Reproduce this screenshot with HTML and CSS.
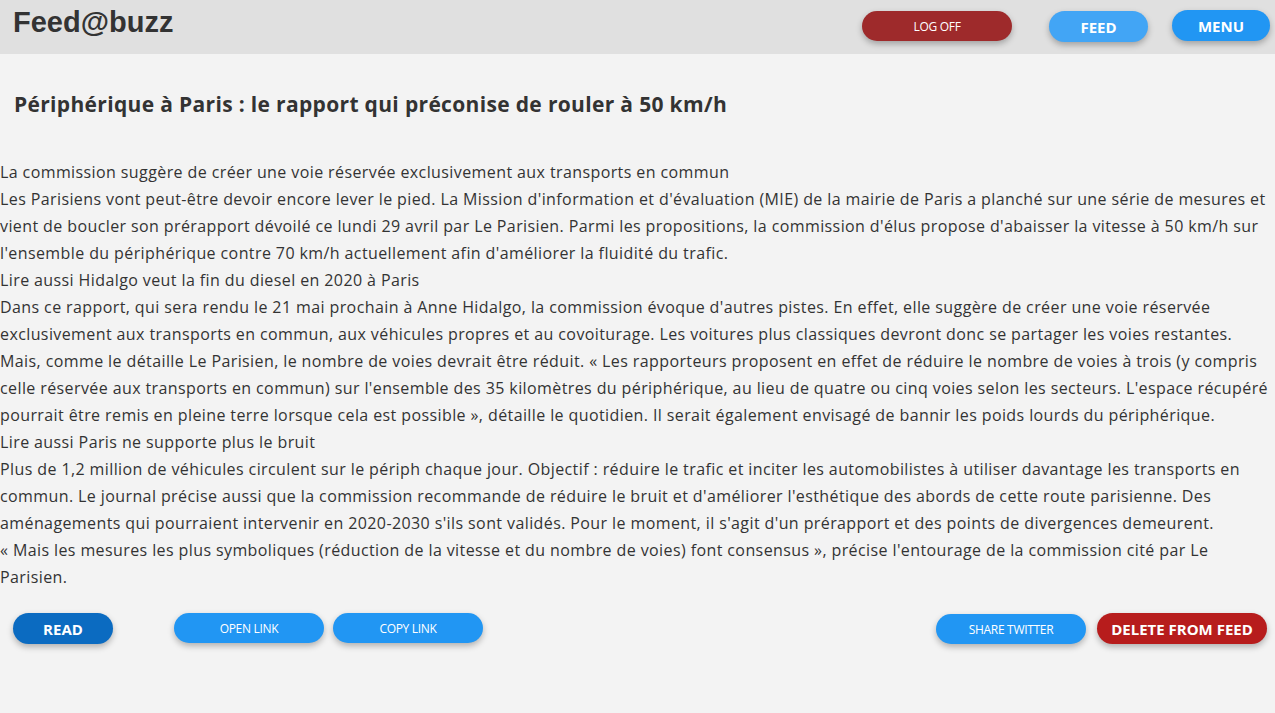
FILE: index.html
```html
<!DOCTYPE html>
<html lang="fr">
<head>
<meta charset="utf-8">
<title>Feed@buzz</title>
<link rel="stylesheet" href="styles.css">
</head>
<body>
<header class="topbar">
  <div class="brand">Feed@buzz</div>
  <nav class="top-actions">
    <button class="btn btn-logoff">LOG OFF</button>
    <button class="btn btn-feed">FEED</button>
    <button class="btn btn-menu">MENU</button>
  </nav>
</header>
<main class="article">
  <h1 class="title">Périphérique à Paris : le rapport qui préconise de rouler à 50 km/h</h1>
  <div class="content">
    <p>La commission suggère de créer une voie réservée exclusivement aux transports en commun</p>
    <p>Les Parisiens vont peut-être devoir encore lever le pied. La Mission d'information et d'évaluation (MIE) de la mairie de Paris a planché sur une série de mesures et vient de boucler son prérapport dévoilé ce lundi 29 avril par Le Parisien. Parmi les propositions, la commission d'élus propose d'abaisser la vitesse à 50 km/h sur l'ensemble du périphérique contre 70 km/h actuellement afin d'améliorer la fluidité du trafic.</p>
    <p>Lire aussi Hidalgo veut la fin du diesel en 2020 à Paris</p>
    <p>Dans ce rapport, qui sera rendu le 21 mai prochain à Anne Hidalgo, la commission évoque d'autres pistes. En effet, elle suggère de créer une voie réservée exclusivement aux transports en commun, aux véhicules propres et au covoiturage. Les voitures plus classiques devront donc se partager les voies restantes. Mais, comme le détaille Le Parisien, le nombre de voies devrait être réduit. « Les rapporteurs proposent en effet de réduire le nombre de voies à trois (y compris celle réservée aux transports en commun) sur l'ensemble des 35 kilomètres du périphérique, au lieu de quatre ou cinq voies selon les secteurs. L'espace récupéré pourrait être remis en pleine terre lorsque cela est possible », détaille le quotidien. Il serait également envisagé de bannir les poids lourds du périphérique.</p>
    <p>Lire aussi Paris ne supporte plus le bruit</p>
    <p>Plus de 1,2 million de véhicules circulent sur le périph chaque jour. Objectif : réduire le trafic et inciter les automobilistes à utiliser davantage les transports en commun. Le journal précise aussi que la commission recommande de réduire le bruit et d'améliorer l'esthétique des abords de cette route parisienne. Des aménagements qui pourraient intervenir en 2020-2030 s'ils sont validés. Pour le moment, il s'agit d'un prérapport et des points de divergences demeurent.</p>
    <p>« Mais les mesures les plus symboliques (réduction de la vitesse et du nombre de voies) font consensus », précise l'entourage de la commission cité par Le Parisien.</p>
  </div>
  <div class="actions">
    <div class="actions-left">
      <button class="btn btn-read">READ</button>
      <button class="btn btn-link btn-open">OPEN LINK</button>
      <button class="btn btn-link">COPY LINK</button>
    </div>
    <div class="actions-right">
      <button class="btn btn-link">SHARE TWITTER</button>
      <button class="btn btn-delete">DELETE FROM FEED</button>
    </div>
  </div>
</main>
</body>
</html>
```

FILE: styles.css
```css
html, body {
  margin: 0;
  padding: 0;
}
body {
  background: #f3f3f3;
  color: #333333;
  font-family: "Open Sans", "Noto Sans", sans-serif;
  width: 1275px;
  min-height: 713px;
}
.topbar {
  height: 54px;
  background: #e0e0e0;
  display: flex;
  align-items: flex-start;
  justify-content: space-between;
}
.brand {
  font-family: "Liberation Sans", Arial, sans-serif;
  font-weight: bold;
  font-size: 29px;
  color: #333333;
  padding: 6px 0 0 13px;
  line-height: 32px;
}
.top-actions {
  display: flex;
  align-items: flex-start;
  padding: 10px 5px 0 0;
}
.btn {
  border: none;
  border-radius: 16px;
  color: #ffffff;
  font-family: "Open Sans", "Noto Sans", sans-serif;
  height: 30px;
  padding: 0;
  box-shadow: 0 3px 6px rgba(0, 0, 0, 0.28);
  cursor: pointer;
}
.btn-logoff {
  background: #9e2a2b;
  width: 150px;
  font-size: 12px;
  margin-top: 1px;
  letter-spacing: -0.3px;
}
.btn-feed {
  background: #42a5f5;
  width: 99px;
  font-size: 15px;
  font-weight: bold;
  margin-left: 37px;
  margin-top: 1px;
  height: 31px;
}
.btn-menu {
  background: #2196f3;
  width: 98px;
  font-size: 15px;
  font-weight: bold;
  margin-left: 24px;
  height: 31px;
}
.article {
  display: flex;
  flex-direction: column;
}
.title {
  font-size: 21px;
  font-weight: bold;
  margin: 36px 0 0 14px;
  line-height: 28px;
  letter-spacing: 0.33px;
}
.content {
  margin-top: 41px;
  font-size: 16px;
  line-height: 27px;
  letter-spacing: 0.4px;
}
.content p {
  margin: 0;
}
.actions {
  display: flex;
  justify-content: space-between;
  align-items: flex-start;
  padding: 22px 8px 0 13px;
}
.actions-left, .actions-right {
  display: flex;
  align-items: flex-start;
}
.btn-read {
  background: #0b6bc1;
  width: 100px;
  height: 31px;
  font-size: 15px;
  font-weight: bold;
}
.btn-link {
  background: #2196f3;
  width: 150px;
  font-size: 12px;
  letter-spacing: -0.3px;
  margin-left: 9px;
}
.btn-open {
  margin-left: 61px;
}
.actions-right {
  padding-top: 1px;
}
.btn-delete {
  background: #b71c1c;
  width: 170px;
  height: 31px;
  font-size: 15px;
  font-weight: bold;
  margin-left: 11px;
  margin-top: -1px;
}
```
